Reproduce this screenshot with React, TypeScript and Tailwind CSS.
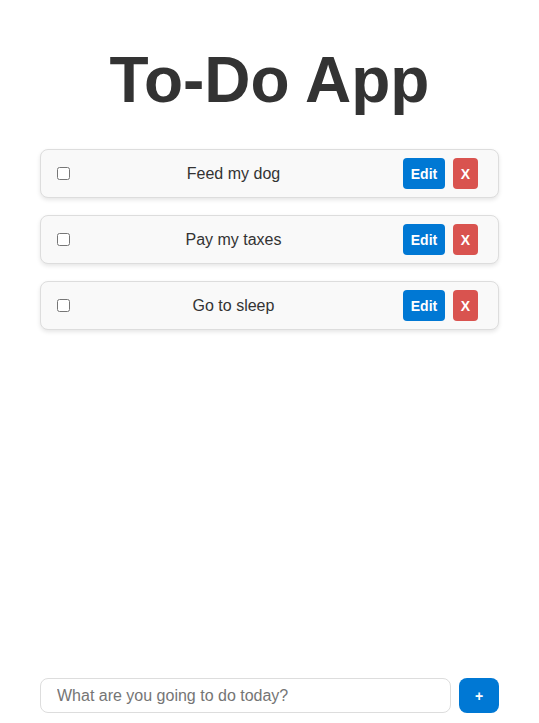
import React, { useState } from 'react';

type Todo = { id: number; text: string; done: boolean };

const initial: Todo[] = [
  { id: 1, text: 'Feed my dog', done: false },
  { id: 2, text: 'Pay my taxes', done: false },
  { id: 3, text: 'Go to sleep', done: false },
];

export default function App() {
  const [todos, setTodos] = useState<Todo[]>(initial);
  const [draft, setDraft] = useState('');

  const add = () => {
    if (!draft.trim()) return;
    setTodos([...todos, { id: Date.now(), text: draft.trim(), done: false }]);
    setDraft('');
  };

  return (
    <div className="flex h-[723px] flex-col px-10 font-['Liberation_Sans',Arial,sans-serif] text-[#333]">
      <h1 className="mt-[43px] mb-8 text-center text-[64px] leading-[74px] font-bold">To-Do App</h1>

      <ul className="flex flex-col gap-[17px]">
        {todos.map(t => (
          <li
            key={t.id}
            className="flex h-[49px] items-center rounded-lg border border-[#ddd] bg-[#f9f9f9] pr-5 pl-[13px] shadow-[0_2px_4px_rgba(0,0,0,0.1)]"
          >
            <input
              type="checkbox"
              checked={t.done}
              onChange={() => setTodos(todos.map(x => (x.id === t.id ? { ...x, done: !x.done } : x)))}
              className="mr-1 ml-[3px] h-[13px] w-[13px]"
            />
            <span className={`mr-[10px] flex-1 text-center text-base ${t.done ? 'line-through' : ''}`}>{t.text}</span>
            <button className="h-[31px] w-[42px] rounded bg-[#0078d4] text-sm font-bold text-white">Edit</button>
            <button
              onClick={() => setTodos(todos.filter(x => x.id !== t.id))}
              className="ml-2 h-[31px] w-[25px] rounded bg-[#d9534f] text-sm font-bold text-white"
            >
              X
            </button>
          </li>
        ))}
      </ul>

      <div className="mt-auto mb-[10px] flex gap-2">
        <input
          value={draft}
          onChange={e => setDraft(e.target.value)}
          placeholder="What are you going to do today?"
          className="h-[35px] flex-1 rounded-lg border border-[#ddd] px-4 text-base outline-none placeholder:text-[#757575]"
        />
        <button onClick={add} className="h-[35px] w-10 rounded-lg bg-[#0078d4] text-sm font-bold text-white">
          +
        </button>
      </div>
    </div>
  );
}
